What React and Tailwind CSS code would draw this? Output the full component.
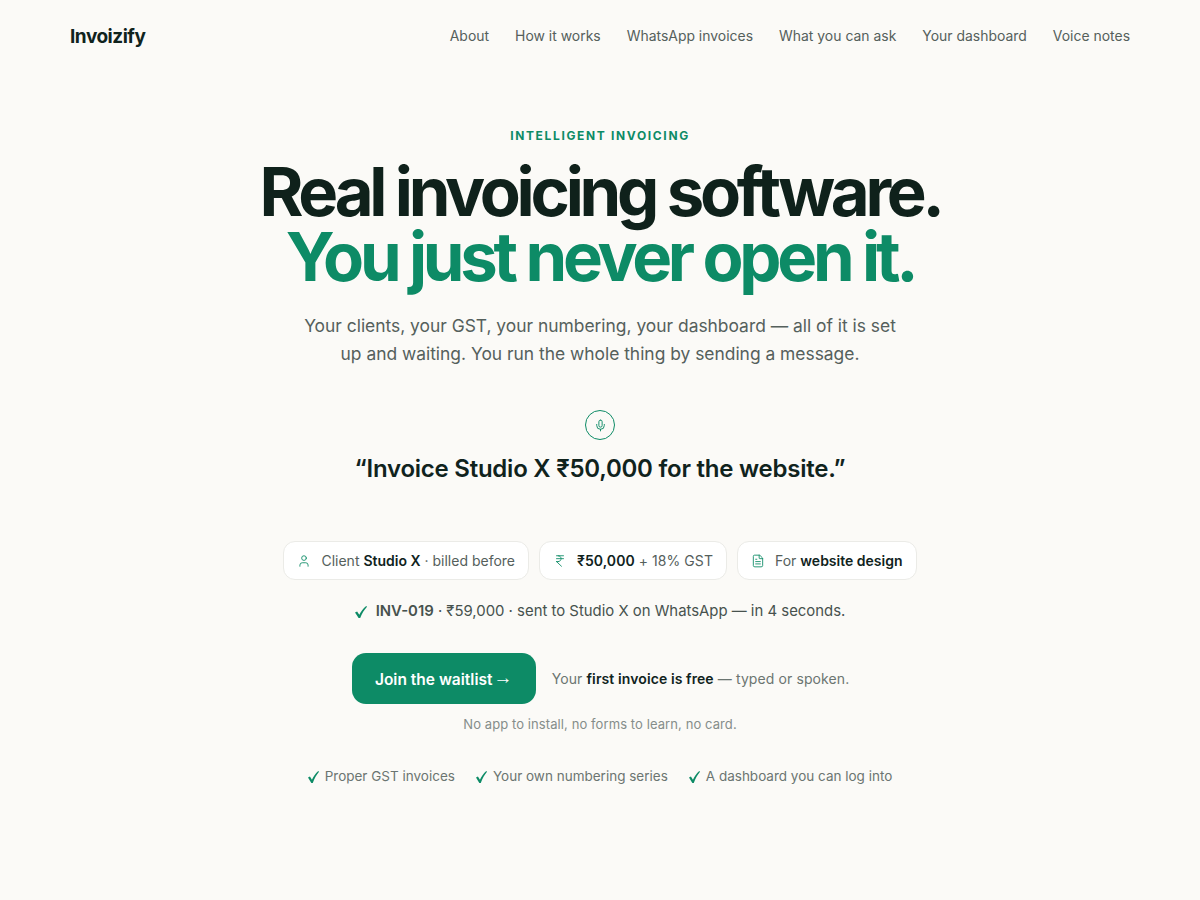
import React from 'react';
import { User, IndianRupee, FileText, Mic } from 'lucide-react';

const F = { fontFamily: 'Inter, sans-serif' };

function Check({ className }) {
  return (
    <svg viewBox="0 0 12 12" preserveAspectRatio="none" className={`shrink-0 text-[#0d8b66] ${className}`} fill="currentColor">
      <path d="M0 6.6 L2.1 5.6 L4.3 8.8 C5.8 5.6 8 2.6 11.2 0 L12 0.7 C9.2 3.8 7 7.4 5.2 12 L3.6 12 Z" />
    </svg>
  );
}

function Chip({ icon, children, className = '' }) {
  return (
    <div className={`flex items-center gap-[10px] h-[39px] px-[13px] rounded-[12px] border border-[#ebebe7] bg-white text-[14px] text-[#55605c] ${className}`}>
      {icon}
      <span>{children}</span>
    </div>
  );
}

export default function App() {
  return (
    <div style={F} className="min-h-[900px] bg-[#fbfaf7] text-[#10231d]">
      <header className="flex items-center justify-between px-[70px] h-[72px]">
        <div className="mt-[2px] text-[19px] font-bold tracking-[-0.48px]">Invoizify</div>
        <nav className="flex gap-[26px] text-[13.95px] text-[#55605c]">
          <span>About</span><span>How it works</span><span>WhatsApp invoices</span><span>What you can ask</span><span>Your dashboard</span><span>Voice notes</span>
        </nav>
      </header>
      <main className="flex flex-col items-center pt-[56px]">
        <div className="text-[12px] font-bold tracking-[1.65px] text-[#0d8b66] leading-[16px]">INTELLIGENT INVOICING</div>
        <h1 className="mt-[15px] text-[67px] leading-[65px] font-bold tracking-[-4.25px] text-center text-[#0f211b]">
          Real invoicing software.<br /><span className="text-[#0d8b66]">You just never open it.</span>
        </h1>
        <p className="mt-[23px] w-[640px] text-center text-[17.4px] leading-[28px] text-[#55605c]">
          Your clients, your GST, your numbering, your dashboard — all of it is set<br />up and waiting. You run the whole thing by sending a message.
        </p>
        <div className="mt-[42px] w-[30px] h-[30px] rounded-full border border-[#0d8b66] flex items-center justify-center text-[#0d8b66]"><Mic size={13} strokeWidth={1.75} /></div>
        <div className="mt-[13px] text-[24px] font-semibold tracking-[-0.24px] leading-[32px]">“Invoice Studio X ₹50,000 for the website.”</div>
        <div className="mt-[56px] flex gap-[10px]">
          <Chip icon={<User size={14} strokeWidth={1.5} className="text-[#0d8b66]" />}>Client <b className="font-semibold text-[#10231d]">Studio X</b> · billed before</Chip>
          <Chip className="tracking-[0.06px]" icon={<IndianRupee size={14} strokeWidth={1.5} className="text-[#0d8b66]" />}><b className="font-semibold text-[#10231d]">₹50,000</b> + 18% GST</Chip>
          <Chip icon={<FileText size={14} strokeWidth={1.5} className="text-[#0d8b66]" />}>For <b className="font-semibold text-[#10231d]">website design</b></Chip>
        </div>
        <div className="mt-[20px] flex items-center gap-[9px] text-[14.9px] leading-[22px] text-[#47524e]">
          <Check className="w-[12px] h-[12px] mt-[2px]" /><span><b className="font-semibold">INV-019</b> · ₹59,000 · sent to Studio X on WhatsApp — in 4 seconds.</span>
        </div>
        <div className="mt-[31px] ml-[1px] flex items-center gap-[16px]">
          <div className="flex items-center justify-center gap-[1px] w-[184px] h-[51px] rounded-[14px] bg-[#0d8b66] text-white text-[15.5px] font-semibold">
            <span className="mt-[2px]">Join the waitlist</span>
            <span className="font-['Liberation_Sans'] text-[19px] leading-none mb-[3px]">→</span>
          </div>
          <div className="text-[14px] tracking-[0.1px] text-[#6b7571]">Your <b className="font-semibold text-[#10231d]">first invoice is free</b> — typed or spoken.</div>
        </div>
        <div className="mt-[11px] text-[13px] tracking-[0.09px] leading-[18px] text-[#858d8a]">No app to install, no forms to learn, no card.</div>
        <div className="mt-[33px] flex gap-[21px] text-[13.5px] leading-[20px] text-[#6b7571]">
          <span className="flex items-center gap-[6px]"><Check className="w-[11px] h-[12px] mt-[1px]" />Proper GST invoices</span>
          <span className="flex items-center gap-[6px]"><Check className="w-[11px] h-[12px] mt-[1px]" />Your own numbering series</span>
          <span className="flex items-center gap-[6px]"><Check className="w-[11px] h-[12px] mt-[1px]" />A dashboard you can log into</span>
        </div>
      </main>
    </div>
  );
}
